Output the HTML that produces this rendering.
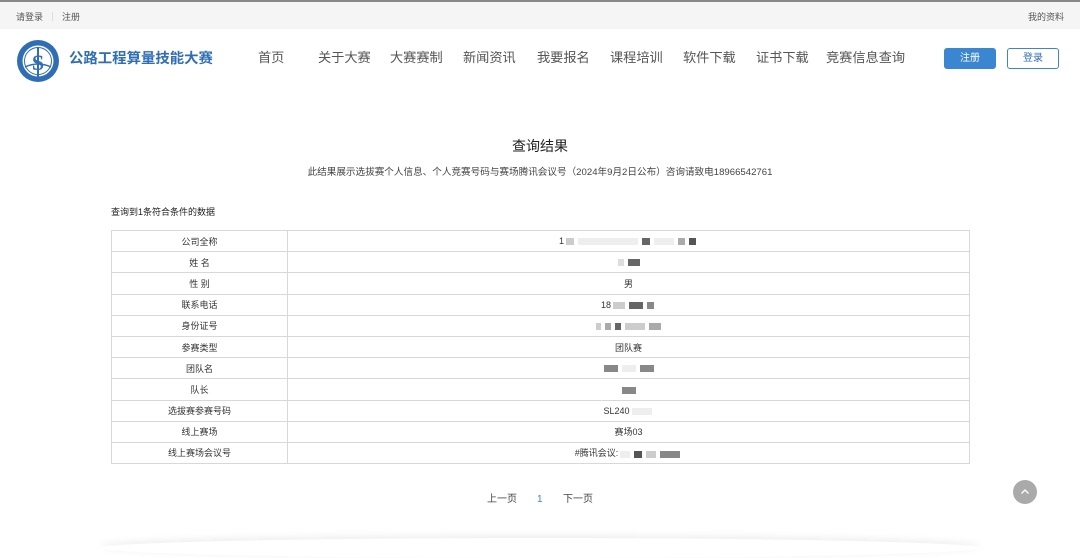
<!DOCTYPE html>
<html><head><meta charset="utf-8"><style>
*{margin:0;padding:0;box-sizing:border-box}
body{width:1080px;height:540px;overflow:hidden;background:#fff;font-family:"Liberation Sans","Noto Sans CJK SC",sans-serif;color:#333;position:relative}
.top{position:absolute;left:0;top:0;width:1080px;height:29px;background:#f5f5f5;border-top:2px solid #888;font-size:9px;color:#555}
.top .l{position:absolute;left:16px;top:8px}
.top .r{position:absolute;right:16px;top:8px}
.sep{display:inline-block;width:1px;height:9px;background:#ddd;margin:0 9px;vertical-align:-1px}
.logo{position:absolute;left:16px;top:39px}
.brand{position:absolute;left:69px;top:50px;font-size:14.4px;font-weight:bold;color:#2f6db5;line-height:18px}
.nav{position:absolute;top:49px;font-size:13.2px;color:#555;line-height:18px}
.btn{position:absolute;top:48px;width:52px;height:21px;border-radius:3px;font-size:10px;text-align:center;line-height:20px}
h1{position:absolute;top:136px;width:1080px;text-align:center;font-size:14px;font-weight:normal;color:#222}
.sub{position:absolute;top:164px;width:1080px;text-align:center;font-size:9.6px;color:#444}
.cnt{position:absolute;left:111px;top:205px;font-size:9px;color:#222}
table{position:absolute;left:111px;top:230px;width:859px;border-collapse:collapse;font-size:9px}
td{border:1px solid #d8d8d8;height:21.2px;text-align:center;color:#333}
td:first-child{width:176px}
.b{display:inline-block;height:7px;background:#999;vertical-align:middle;margin:0 2px}
.pg{position:absolute;top:493px;font-size:10px;color:#444;line-height:14px}
.up{position:absolute;left:1013px;top:480px;width:24px;height:24px;border-radius:50%;background:#aaa}
.sh{position:absolute;left:100px;top:538px;width:880px;height:20px;box-shadow:0 -2px 8px rgba(0,0,0,0.08);border-radius:50%}
</style></head><body>
<div class="top"><div class="l">请登录<span class="sep"></span>注册</div><div class="r">我的资料</div></div>
<svg class="logo" width="44" height="44" viewBox="0 0 44 44"><circle cx="22" cy="22" r="21" fill="#2f6db5"/><circle cx="22" cy="22" r="15.5" fill="#fff"/><circle cx="22" cy="22" r="13.5" fill="none" stroke="#2f6db5" stroke-width="1"/><text x="22" y="31" text-anchor="middle" font-size="22" font-weight="bold" fill="#2f6db5" font-family="Liberation Serif,serif">S</text><rect x="21" y="8" width="2" height="30" fill="#2f6db5"/><path d="M9 28 Q22 22 35 28" stroke="#2f6db5" fill="none" stroke-width="1.5"/></svg>
<div class="brand">公路工程算量技能大赛</div>
<div class="nav" style="left:258px">首页</div>
<div class="nav" style="left:318px">关于大赛</div>
<div class="nav" style="left:390px">大赛赛制</div>
<div class="nav" style="left:463px">新闻资讯</div>
<div class="nav" style="left:537px">我要报名</div>
<div class="nav" style="left:610px">课程培训</div>
<div class="nav" style="left:683px">软件下载</div>
<div class="nav" style="left:756px">证书下载</div>
<div class="nav" style="left:826px">竞赛信息查询</div>
<div class="btn" style="left:944px;background:#3a86d0;color:#fff;border:1px solid #3a86d0">注册</div>
<div class="btn" style="left:1007px;border:1px solid #3a86d0;color:#2f6db5">登录</div>
<h1>查询结果</h1>
<div class="sub">此结果展示选拔赛个人信息、个人竞赛号码与赛场腾讯会议号（2024年9月2日公布）咨询请致电18966542761</div>
<div class="cnt">查询到1条符合条件的数据</div>
<table>
<tr><td>公司全称</td><td>1<span class="b" style="width:8px;background:#ccc"></span><span class="b" style="width:60px;background:#eee"></span><span class="b" style="width:8px;background:#666"></span><span class="b" style="width:20px;background:#eee"></span><span class="b" style="width:7px;background:#aaa"></span><span class="b" style="width:7px;background:#555"></span></td></tr>
<tr><td>姓 名</td><td><span class="b" style="width:6px;background:#ddd"></span><span class="b" style="width:12px;background:#666"></span></td></tr>
<tr><td>性 别</td><td>男</td></tr>
<tr><td>联系电话</td><td>18<span class="b" style="width:12px;background:#ccc"></span><span class="b" style="width:14px;background:#666"></span><span class="b" style="width:7px;background:#888"></span></td></tr>
<tr><td>身份证号</td><td><span class="b" style="width:5px;background:#ccc"></span><span class="b" style="width:6px;background:#aaa"></span><span class="b" style="width:6px;background:#666"></span><span class="b" style="width:20px;background:#ccc"></span><span class="b" style="width:12px;background:#aaa"></span></td></tr>
<tr><td>参赛类型</td><td>团队赛</td></tr>
<tr><td>团队名</td><td><span class="b" style="width:14px;background:#888"></span><span class="b" style="width:14px;background:#eee"></span><span class="b" style="width:14px;background:#888"></span></td></tr>
<tr><td>队长</td><td><span class="b" style="width:14px;background:#888"></span></td></tr>
<tr><td>选拔赛参赛号码</td><td>SL240<span class="b" style="width:20px;background:#eee"></span></td></tr>
<tr><td>线上赛场</td><td>赛场03</td></tr>
<tr><td>线上赛场会议号</td><td>#腾讯会议:<span class="b" style="width:10px;background:#eee"></span><span class="b" style="width:8px;background:#555"></span><span class="b" style="width:10px;background:#ccc"></span><span class="b" style="width:20px;background:#888"></span></td></tr>
</table>
<div class="pg" style="left:487px">上一页</div>
<div class="pg" style="left:537px;color:#3a86d0">1</div>
<div class="pg" style="left:563px">下一页</div>
<div class="up"><svg width="24" height="24"><path d="M8.5 13.5 L12 10 L15.5 13.5" stroke="#fff" fill="none" stroke-width="1.3"/></svg></div>
<div class="sh"></div>
</body></html>
